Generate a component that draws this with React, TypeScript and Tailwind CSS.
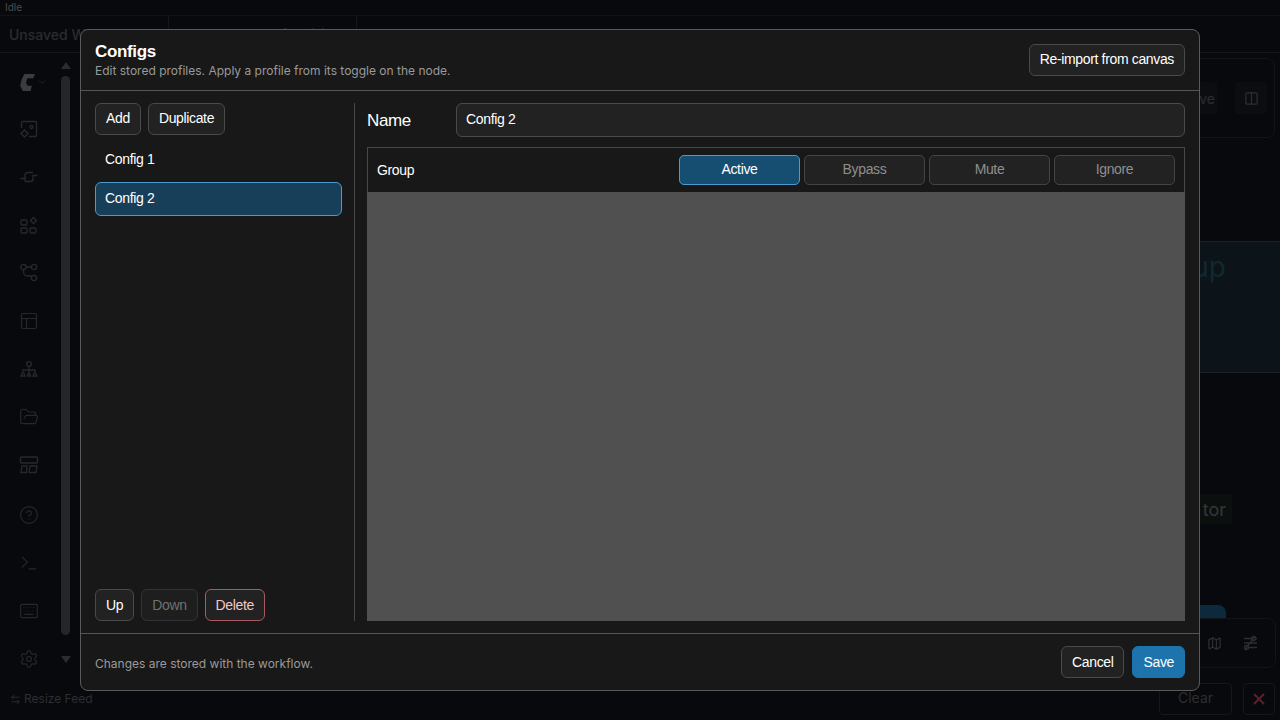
import {
  ArrowLeftRight,
  ChevronDown,
  CircleHelp,
  Columns2,
  FolderOpen,
  Keyboard,
  Map,
  PanelsTopLeft,
  Settings,
  Terminal,
  X,
} from "lucide-react";

const sans = "font-['Liberation_Sans',Arial,sans-serif]";

const ImageDiamondIcon = () => (
  <svg width="20" height="20" viewBox="0 0 20 20" fill="none" stroke="currentColor" strokeWidth="1.4">
    <path d="M2.500 9V3.500a1 1 0 0 1 1-1h13a1 1 0 0 1 1 1v13a1 1 0 0 1-1 1H10" />
    <circle cx="12.500" cy="8" r="1.500" />
    <path d="M5.500 11l3.500 3.500-3.500 3.500L2 14.500z" />
  </svg>
);

const PlugIcon = () => (
  <svg width="20" height="20" viewBox="0 0 20 20" fill="none" stroke="currentColor" strokeWidth="1.4">
    <path d="M1.500 11.500H6M6 14.500V8a2.500 2.500 0 0 1 2.500-2.500H14M6 14.500h5.500A2.500 2.500 0 0 0 14 12V8.500h4.500" />
  </svg>
);

const GraphIcon = () => (
  <svg width="20" height="20" viewBox="0 0 20 20" fill="none" stroke="currentColor" strokeWidth="1.4">
    <circle cx="4.500" cy="4" r="2.600" />
    <circle cx="15" cy="4" r="2.600" />
    <circle cx="15" cy="15" r="2.600" />
    <path d="M7 4h5.500M4.500 6.600V9a4 4 0 0 0 4 4h4" />
  </svg>
);

const TreeIcon = () => (
  <svg width="20" height="20" viewBox="0 0 20 20" fill="none" stroke="currentColor" strokeWidth="1.3">
    <circle cx="10" cy="5" r="2.400" />
    <path d="M10 7.500V11M4 13v-2h12v2M10 11v2M2 17l1.500-3h1.400L6 17zM8.400 17l1-3h1.200l1 3zM14 17l1.100-3h1.400l1.500 3z" />
  </svg>
);

const PanelsIcon = () => (
  <svg width="20" height="20" viewBox="0 0 20 20" fill="none" stroke="currentColor" strokeWidth="1.4">
    <rect x="1.500" y="2" width="17" height="6" rx="1" />
    <path d="M3 11h5l-.6 6.500H2zM11 11h7l-1 6.500h-7z" />
  </svg>
);

const BlocksIcon = () => (
  <svg width="20" height="20" viewBox="0 0 20 20" fill="none" stroke="currentColor" strokeWidth="1.4">
    <rect x="2" y="5" width="6" height="5" rx="1.200" />
    <rect x="2" y="13" width="6" height="5" rx="1.200" />
    <rect x="11" y="13" width="6" height="5" rx="1.200" />
    <path d="M14.500 2.500l3 3-3 3-3-3z" />
  </svg>
);

const LinkOffIcon = () => (
  <svg width="17" height="17" viewBox="0 0 17 17" fill="none" stroke="currentColor" strokeWidth="1.300">
    <circle cx="11.500" cy="3.500" r="2" />
    <circle cx="4.500" cy="12.500" r="2" />
    <path d="M2 3.500h7M14 3.500h1M2 8h13M7 12.500h8M3 15L13 1" />
  </svg>
);

const Logo = () => (
  <svg width="17" height="19" viewBox="0 0 16 18" fill="#3a3c40">
    <path d="M5 1h10l-1.500 4H8L6.500 9 8 12h4l-1 5H3.500L1 12l1.500-6z" />
  </svg>
);

const railIcon = "flex h-12 w-full items-center justify-center text-[#26282c]";

const Sidebar = () => (
  <aside className="flex w-[58px] shrink-0 flex-col items-center pt-[6px]">
    <div className="flex h-[46px] w-full items-center justify-center gap-[1px] pl-[8px] text-[#26282c]">
      <Logo />
      <ChevronDown size={10} />
    </div>
    <div className={railIcon}><ImageDiamondIcon /></div>
    <div className={railIcon}><PlugIcon /></div>
    <div className={railIcon}><BlocksIcon /></div>
    <div className={railIcon}><GraphIcon /></div>
    <div className={railIcon}><PanelsTopLeft size={20} strokeWidth={1.4} /></div>
    <div className={railIcon}><TreeIcon /></div>
    <div className={railIcon}><FolderOpen size={20} strokeWidth={1.4} /></div>
    <div className={railIcon}><PanelsIcon /></div>
    <div className={`${railIcon} mt-[2px]`}><CircleHelp size={20} strokeWidth={1.4} /></div>
    <div className={railIcon}><Terminal size={20} strokeWidth={1.4} /></div>
    <div className={railIcon}><Keyboard size={20} strokeWidth={1.4} /></div>
    <div className={railIcon}><Settings size={20} strokeWidth={1.4} /></div>
  </aside>
);

const Background = () => (
  <div className="flex h-screen flex-col overflow-hidden bg-[#08090c] font-['Inter',sans-serif]">
    <div className="flex h-4 shrink-0 items-center border-b border-[#101216] pl-[5px] text-[10px] text-[#4a4c50]">Idle</div>
    <div className="flex h-[37px] shrink-0 border-b border-[#14161a]">
      <div className="flex w-[169px] items-center border-r border-[#15171b] pl-[9px] text-[14px] font-medium text-[#2a2c30]">Unsaved Workflow</div>
      <div className="flex w-[188px] items-start justify-center border-r border-[#15171b] pt-[9px] text-[12px] text-[#2c2e32]">Unsaved Workflow (2)</div>
      <div className="pl-[16px] pt-[9px] text-[12px] text-[#2c2e32]">+</div>
    </div>
    <div className="flex min-h-0 flex-1">
      <Sidebar />
      <div className="flex w-[15px] shrink-0 flex-col items-center pt-[9px]">
        <div className="h-0 w-0 border-x-[5px] border-b-[7px] border-x-transparent border-b-[#2a2c30]" />
        <div className="mt-[7px] h-[559px] w-[9px] rounded-full bg-[#24262a]" />
        <div className="mt-[21px] h-0 w-0 border-x-[5px] border-t-[7px] border-x-transparent border-t-[#2a2c30]" />
      </div>
      <div className="flex-1" />
      <div className="flex w-[100px] shrink-0 flex-col pt-[5px]">
        <div className="flex h-[80px] w-[95px] items-center justify-end gap-[18px] rounded-lg border border-[#121418] pr-[7px] text-[#2c2e32]">
          <span className="flex h-[32px] w-[36px] items-center justify-end rounded bg-[#0c0d10] pr-[2px] text-[14px]">ve</span>
          <span className="flex h-[32px] w-[32px] items-center justify-center rounded bg-[#0c0d10]"><Columns2 size={15} /></span>
        </div>
        <div className="mt-[103px] h-[132px] border-y border-[#1a2228] bg-[#0c1419] pt-[8px]">
          <div className="w-[46px] text-right text-[28px] leading-[34px] text-[#12282f]">up</div>
        </div>
        <div className="mt-[121px] flex h-[30px] w-[52px] items-center justify-end bg-[#0b100e] pr-[6px] text-[18px] text-[#34363a]">tor</div>
        <div className="mt-[81px] h-[13px] w-[46px] rounded-tr-lg bg-[#0d2a3c]" />
        <div className="flex h-[50px] w-[96px] items-center justify-end gap-[20px] rounded-lg border border-[#121418] pr-[16px] text-[#2c2e32]">
          <Map size={15} />
          <LinkOffIcon />
        </div>
      </div>
    </div>
    <div className="flex h-[37px] shrink-0 items-start justify-between pl-[10px] pr-[5px]">
      <div className="flex items-center gap-[3px] pt-[7px] text-[12px] text-[#2c2e32]">
        <ArrowLeftRight size={11} /> Resize Feed
      </div>
      <div className="flex gap-[11px]">
        <div className="flex h-[32px] w-[73px] items-center justify-center rounded border border-[#15171b] pb-[3px] text-[14px] text-[#2c2e32]">Clear</div>
        <div className="flex h-[32px] w-[32px] items-center justify-center rounded border border-[#15171b] text-[#5a1f30]"><X size={18} strokeWidth={2.5} /></div>
      </div>
    </div>
  </div>
);

const label14 = "text-[14px] tracking-[-0.025em]";
const btnBase = `flex h-[32px] items-center justify-center rounded-[6px] border px-[10px] ${label14}`;
const btn = `${btnBase} border-[#4a4a4a] bg-[#222222] text-white`;
const btnUp = `${btn} pb-[1px]`;

const toggleBase = `flex h-[30px] w-[121px] items-center justify-center rounded-[5px] border pb-[1px] ${label14}`;

const ModeToggle = ({ label, active }: { label: string; active?: boolean }) => (
  <div
    className={
      active
        ? `${toggleBase} border-[#4a9ccc] bg-[#164e72] text-white`
        : `${toggleBase} border-[#444444] bg-[#222222] text-[#8f8f8f]`
    }
  >
    {label}
  </div>
);

const Modal = () => (
  <div className="fixed inset-0 flex items-center justify-center">
    <div className={`flex h-[662px] w-[1120px] flex-col rounded-[8px] border border-[#5a5a5a] bg-[#181818] ${sans}`}>
      <header className="flex h-[61px] shrink-0 items-center justify-between border-b border-[#555555] px-[14px]">
        <div className="pt-[1px]">
          <h2 className="text-[17px] leading-[20px] font-bold tracking-[-0.02em] text-white">Configs</h2>
          <p className="font-['Inter',sans-serif] text-[12px] leading-[17px] text-[#9a9a9a]">
            Edit stored profiles. Apply a profile from its toggle on the node.
          </p>
        </div>
        <button className={btnUp}>Re-import from canvas</button>
      </header>

      <div className="flex min-h-0 flex-1 px-[14px] pt-[12px] pb-[12px]">
        <div className="flex w-[260px] shrink-0 flex-col border-r border-[#484848] pr-[12px]">
          <div className="flex gap-[7px]">
            <button className={btnUp}>Add</button>
            <button className={btnUp}>Duplicate</button>
          </div>
          <div className="mt-[7px] flex flex-1 flex-col gap-[6px]">
            <div className={`flex h-[34px] items-center rounded-[6px] border border-transparent px-[9px] text-white ${label14}`}>Config 1</div>
            <div className={`flex h-[34px] items-center rounded-[6px] border border-[#4a9ccc] bg-[#183f59] px-[9px] pb-[1px] text-white ${label14}`}>Config 2</div>
          </div>
          <div className="flex gap-[7px]">
            <button className={btn}>Up</button>
            <button className={`${btnBase} border-[#333333] bg-[#1e1e1e] text-[#707070]`}>Down</button>
            <button className={`${btnBase} border-[#a85a60] bg-[#222222] text-[#f0c8c8]`}>Delete</button>
          </div>
        </div>

        <div className="flex min-w-0 flex-1 flex-col pl-[12px]">
          <div className="flex h-[34px] shrink-0 items-center">
            <label className="w-[89px] pt-[1px] text-[17px] tracking-[-0.02em] text-white">Name</label>
            <div className={`flex h-[34px] flex-1 items-center rounded-[6px] border border-[#4a4a4a] bg-[#222222] px-[9px] pb-[1px] text-white ${label14}`}>Config 2</div>
          </div>
          <div className="mt-[10px] flex min-h-0 flex-1 flex-col">
            <div className="flex h-[45px] shrink-0 items-center justify-between border-x border-t border-[#484848] bg-[#181818] pr-[9px] pl-[9px]">
              <span className={`text-white ${label14}`}>Group</span>
              <div className="flex gap-[4px]">
                <ModeToggle label="Active" active />
                <ModeToggle label="Bypass" />
                <ModeToggle label="Mute" />
                <ModeToggle label="Ignore" />
              </div>
            </div>
            <div className="flex-1 bg-[#505050]" />
          </div>
        </div>
      </div>

      <footer className="flex h-[57px] shrink-0 items-center justify-between border-t border-[#555555] px-[14px]">
        <p className="mt-[3px] font-['Inter',sans-serif] text-[12px] text-[#9a9a9a]">Changes are stored with the workflow.</p>
        <div className="flex gap-[8px]">
          <button className={btn}>Cancel</button>
          <button className={`${btnBase} border-[#1d74ad] bg-[#1d74ad] text-white`}>Save</button>
        </div>
      </footer>
    </div>
  </div>
);

export default function App() {
  return (
    <>
      <Background />
      <Modal />
    </>
  );
}
